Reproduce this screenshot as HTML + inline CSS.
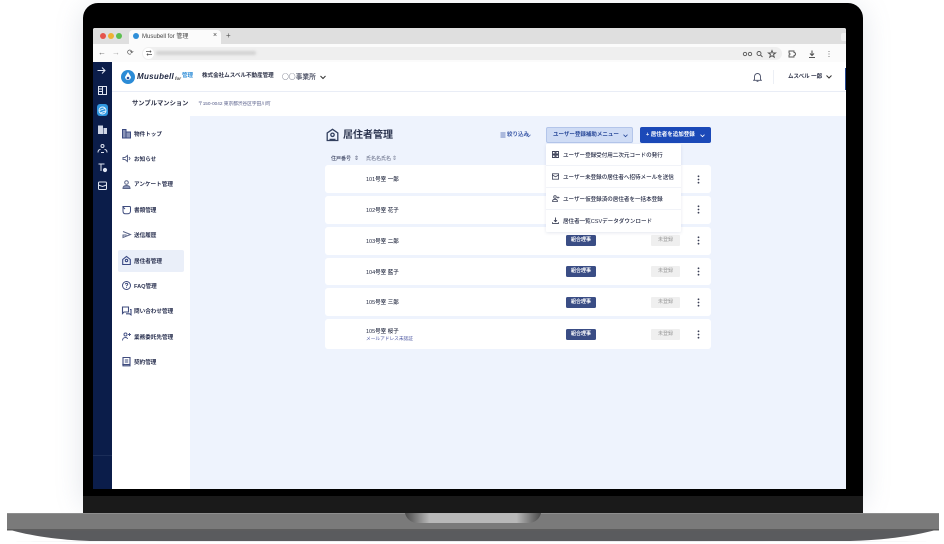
<!DOCTYPE html>
<html lang="ja"><head><meta charset="utf-8"><title>Musubell</title>
<style>
html,body{margin:0;padding:0;background:#fff;}
#w{position:relative;width:944px;height:544px;overflow:hidden;background:#fff;font-family:"Liberation Sans","Noto Sans CJK JP",sans-serif;color:#1b2440;filter:blur(.3px);}
#w div,#w span.a,#w svg{position:absolute;}
.t{white-space:nowrap;line-height:1;}
.nav{left:134px;font-size:5.6px;font-weight:700;color:#2a3150;white-space:nowrap;line-height:8px;}
.ni{left:121px;width:11px;height:11px;}
.si{left:97px;width:11px;height:11px;}
.row{left:325px;width:386px;background:#fff;border-radius:3px;}
.nm{left:366px;font-size:5.5px;font-weight:500;color:#22283f;white-space:nowrap;line-height:8px;}
.kumi{left:566px;width:30px;height:11px;background:#3a4d85;border-radius:1.5px;color:#fff;font-size:5px;font-weight:700;text-align:center;line-height:11px;}
.mi{left:651px;width:29px;height:11px;background:#efefef;border-radius:1px;color:#9a9a9a;font-size:5px;text-align:center;line-height:11px;}
.dots{left:697px;width:3px;height:9px;}
.mt{left:563px;font-size:5.55px;font-weight:500;color:#252b45;white-space:nowrap;line-height:8px;}
</style></head><body><div id="w">
<!-- shadow -->
<div style="left:83px;top:8px;width:780px;height:500px;box-shadow:0 0 28px rgba(120,130,160,.22);border-radius:14px;"></div>
<!-- laptop body -->
<div style="left:83px;top:3px;width:780px;height:510px;background:#000;border-radius:15px 15px 0 0;"></div>
<div style="left:83px;top:496px;width:780px;height:17px;background:#1a1a1a;"></div>
<!-- base -->
<svg style="left:0;top:510px;" width="944" height="34" viewBox="0 0 944 34">
<path d="M12 31C60 32 870 32 932 31Z" fill="#cfd2d8" opacity=".6"/>
<path d="M7 19C30 26 60 30 90 31H850C885 30 915 26 939 19V18H7Z" fill="#5a5b5e"/>
<rect x="7" y="3" width="932" height="17" fill="#7a7a7a"/>
<rect x="7" y="3" width="932" height="1" fill="#8e8e8e"/>
<rect x="7" y="19" width="932" height="1.5" fill="#5d5d5d"/>
<defs><linearGradient id="g" x1="0" x2="1" y1="0" y2="0"><stop offset="0" stop-color="#4b4b4b"/><stop offset=".18" stop-color="#b8b8b8"/><stop offset=".82" stop-color="#b8b8b8"/><stop offset="1" stop-color="#4b4b4b"/></linearGradient></defs>
<path d="M405 3H541C540 8 536 12 530 13H416C410 12 406 8 405 3Z" fill="url(#g)"/>
</svg>
<!-- screen -->
<div style="left:93px;top:28px;width:753px;height:461px;background:#eef3fd;overflow:hidden;border-radius:2px 2px 0 0;"></div>
<!-- tab strip -->
<div style="left:93px;top:28px;width:753px;height:16px;background:#dfdfdf;border-radius:2px 2px 0 0;"></div>
<div style="left:129px;top:30px;width:92px;height:14px;background:#fbfbfb;border-radius:4px 4px 0 0;"></div>
<div style="left:100px;top:33px;width:6px;height:6px;border-radius:50%;background:#e5534b;"></div>
<div style="left:108px;top:33px;width:6px;height:6px;border-radius:50%;background:#eeb132;"></div>
<div style="left:116px;top:33px;width:6px;height:6px;border-radius:50%;background:#5cbf4f;"></div>
<div style="left:133px;top:33px;width:6px;height:6px;border-radius:50%;background:#2f8fd8;"></div>
<div class="t" style="left:142px;top:33.500px;font-size:6px;color:#444;">Musubell for 管理</div>
<div class="t" style="left:213px;top:32px;font-size:7px;color:#444;">×</div>
<div class="t" style="left:226px;top:32px;font-size:8px;color:#555;">+</div>
<div style="left:841px;top:33px;width:5px;height:8px;background:#f0f0f0;border-radius:2px 0 0 2px;"></div>
<!-- toolbar -->
<div style="left:93px;top:44px;width:753px;height:18px;background:#fbfbfb;"></div>
<div style="left:142px;top:47px;width:640px;height:13px;background:#efefef;border-radius:7px;"></div>
<div style="left:143px;top:48px;width:11px;height:11px;background:#fff;border-radius:50%;"></div>
<div style="left:156px;top:51px;width:100px;height:4px;background:#d2d2d2;border-radius:2px;filter:blur(1.2px);"></div>
<div class="t" style="left:98px;top:49px;font-size:8px;color:#666;">←</div>
<div class="t" style="left:112px;top:49px;font-size:8px;color:#aaa;">→</div>
<div class="t" style="left:127px;top:49px;font-size:8px;color:#555;">⟳</div>
<svg style="left:146px;top:50px;" width="6" height="6" viewBox="0 0 6 6"><path d="M0 1.500H5M4 .5 5 1.500 4 2.500M6 4.500H1M2 3.500 1 4.500 2 5.500" stroke="#555" stroke-width=".7" fill="none"/></svg>
<svg style="left:742px;top:49px;" width="90" height="10" viewBox="0 0 90 10" fill="none" stroke="#555" stroke-width=".9">
<circle cx="3" cy="5" r="1.700"/><circle cx="8" cy="5" r="1.700"/><circle cx="17" cy="4.500" r="2"/><path d="M18.500 6 20.500 8"/><path d="M30 1.500 31 4H33.600L31.500 5.600 32.300 8.200 30 6.700 27.700 8.200 28.500 5.600 26.400 4H29Z"/><path d="M47 2H52V3.500A1.200 1.200 0 0 1 52 6.500V8H47V6A1 1 0 0 0 47 4Z"/><path d="M70 1.500V6M68 4.500 70 6.500 72 4.500M67 8.500H73" stroke-width="1.100"/><path d="M87 2V2.800M87 4.600V5.400M87 7.200V8" stroke-width="1"/></svg>
<!-- page -->
<div style="left:112px;top:62px;width:734px;height:54px;background:#fff;"></div>
<div style="left:112px;top:91px;width:734px;height:1px;background:#e9edf6;"></div>
<div style="left:112px;top:116px;width:78px;height:373px;background:#fff;"></div>
<div style="left:93px;top:62px;width:19px;height:427px;background:#0b1d4a;"></div>
<div style="left:93px;top:455px;width:19px;height:1px;background:#1b2d58;"></div>
<!-- sidebar icons -->
<svg class="si" style="left:96px;top:65px;" viewBox="0 0 11 11" fill="none" stroke="#dfe5f2" stroke-width="1"><path d="M1.500 5.500H9M6 2.500 9 5.500 6 8.500"/></svg>
<svg class="si" style="top:85px;" viewBox="0 0 11 11" fill="none" stroke="#dfe5f2" stroke-width="1"><rect x="1.500" y="1.500" width="8" height="8"/><path d="M5.500 1.500V9.500M1.500 4H5M1.500 6.500H5"/></svg>
<div style="left:97px;top:104px;width:11px;height:12px;border-radius:3px;background:#2f97e0;"></div>
<svg class="si" style="top:104.500px;" viewBox="0 0 11 11" fill="none" stroke="#eaf5ff" stroke-width=".9"><circle cx="5.500" cy="5.500" r="3.500"/><path d="M2.500 5.500 8 3.500M3 8 8.500 6"/></svg>
<svg class="si" style="top:124px;" viewBox="0 0 11 11" fill="#cfd6e6"><path d="M1 1.500H6V10H1ZM6.500 4H10V10H6.500Z"/></svg>
<svg class="si" style="top:143px;" viewBox="0 0 11 11" fill="none" stroke="#dfe5f2" stroke-width="1"><circle cx="5.500" cy="3" r="1.500"/><path d="M1 9.500C1 7.500 2 6.500 3.500 6.500M10 9.500C10 7.500 9 6.500 7.500 6.500M4 9.500H7"/></svg>
<svg class="si" style="top:162px;" viewBox="0 0 11 11" fill="none" stroke="#dfe5f2" stroke-width="1"><path d="M1.500 2H7.500M4 2V9"/><circle cx="8" cy="8" r="1.600" fill="#dfe5f2"/></svg>
<svg class="si" style="top:180px;" viewBox="0 0 11 11" fill="none" stroke="#dfe5f2" stroke-width="1"><rect x="1.500" y="2" width="8" height="7.500" rx="1"/><path d="M1.500 5 5.500 6.500 9.500 5"/></svg>
<!-- header -->
<div style="left:121px;top:70px;width:14px;height:14px;border-radius:50%;background:#2b8bd6;"></div>
<svg style="left:124px;top:72px;" width="8" height="10" viewBox="0 0 8 10"><path d="M4 0 7 5A3 3 0 1 1 1 5Z" fill="#fff"/><circle cx="4" cy="6" r="1.300" fill="#2b4f9a"/></svg>
<div class="t" style="left:137px;top:73px;font-size:8px;font-weight:700;font-style:italic;letter-spacing:.3px;color:#222a44;">Musubell</div>
<div class="t" style="left:175px;top:76.500px;font-size:4.500px;font-weight:700;font-style:italic;color:#444;">for</div>
<div class="t" style="left:182px;top:74px;font-size:5.500px;font-weight:700;color:#2b8bd6;">管理</div>
<div class="t" style="left:202px;top:74px;font-size:5.550px;font-weight:700;color:#2a2f45;">株式会社ムスベル不動産管理</div>
<div class="t" style="left:282px;top:73px;font-size:6.800px;font-weight:500;color:#3a3f55;font-family:'Noto Sans CJK JP',sans-serif;">○○事業所</div>
<svg style="left:320px;top:75px;" width="6" height="5" viewBox="0 0 6 5" fill="none" stroke="#333" stroke-width="1"><path d="M.5 1 3 3.500 5.500 1"/></svg>
<svg style="left:753px;top:72px;" width="9" height="10" viewBox="0 0 9 10" fill="none" stroke="#4a5068" stroke-width=".9"><path d="M1.500 7.500V4.500A3 3 0 0 1 7.500 4.500V7.500L8.300 8.300H.7ZM3.600 9.300H5.400"/></svg>
<div style="left:773px;top:70px;width:1px;height:14px;background:#eceff5;"></div>
<div class="t" style="left:788px;top:75px;font-size:5.500px;font-weight:700;color:#2a2f45;">ムスベル 一郎</div>
<svg style="left:826px;top:75px;" width="6" height="4" viewBox="0 0 6 4" fill="none" stroke="#333" stroke-width="1"><path d="M.5 .5 3 3 5.500 .5"/></svg>
<div style="left:845px;top:68px;width:1px;height:22px;background:#23458e;"></div>
<!-- subheader -->
<div class="t" style="left:132px;top:101px;font-size:6.300px;font-weight:700;color:#2a2f45;">サンプルマンション</div>
<div class="t" style="left:198px;top:102px;font-size:4.700px;color:#555c88;">〒150-0042 東京都渋谷区宇田川町</div>
<!-- nav -->
<div style="left:118px;top:250px;width:66px;height:22px;background:#eaeff9;border-radius:2px;"></div>
<svg class="ni" style="top:128px;" viewBox="0 0 11 11" fill="none" stroke="#3b4a80" stroke-width="1"><path d="M1.500 1.500H5V10H1.500ZM5 4H9.500V10H5Z" fill="#8b95b8"/></svg>
<svg class="ni" style="top:153px;" viewBox="0 0 11 11" fill="none" stroke="#5a6488" stroke-width="1"><path d="M2 4.500H4L6.500 2.500V8.500L4 6.500H2ZM8 4 9 5.500 8 7"/></svg>
<svg class="ni" style="top:179px;" viewBox="0 0 11 11" fill="none" stroke="#5a6488" stroke-width="1"><circle cx="5.500" cy="3.500" r="1.800"/><path d="M2 9.500C2 7.500 3.500 6.500 5.500 6.500S9 7.500 9 9.500Z" fill="#8b95b8"/></svg>
<svg class="ni" style="top:204px;" viewBox="0 0 11 11" fill="none" stroke="#3f4c7e" stroke-width="1"><path d="M2 2.500H8.500A1 1 0 0 1 9.500 3.500V7C9.500 8.800 8 9.800 6.500 9.800H4.500C3 9.800 2 8.800 2 7Z"/><path d="M1.500 2.500 4 5"/></svg>
<svg class="ni" style="top:229px;" viewBox="0 0 11 11" fill="none" stroke="#5a6488" stroke-width="1"><path d="M2 2.500 9.500 5.500 2 8.500V6H5.500"/></svg>
<svg class="ni" style="top:255px;" viewBox="0 0 11 11" fill="none" stroke="#3a4a85" stroke-width="1.100"><path d="M1.700 9.500V4.500L5.500 1.500 9.300 4.500V9.500Z"/><circle cx="5.500" cy="5.500" r="1.200"/></svg>
<svg class="ni" style="top:280px;" viewBox="0 0 11 11" fill="none" stroke="#3f4c7e" stroke-width="1"><circle cx="5.500" cy="5.500" r="4"/><path d="M4.300 4.300C4.500 3 6.700 3 6.700 4.400 6.700 5.300 5.500 5.300 5.500 6.300M5.500 7.200V8"/></svg>
<svg class="ni" style="top:305px;" viewBox="0 0 11 11" fill="none" stroke="#3f4c7e" stroke-width="1.100"><path d="M1.500 2H7.500V7H3L1.500 8.500ZM9 4.500H10V9.800L8.500 8.800H5"/></svg>
<svg class="ni" style="top:331px;" viewBox="0 0 11 11" fill="none" stroke="#4a5688" stroke-width="1"><circle cx="4.500" cy="3.500" r="1.500"/><path d="M1.500 9.500C1.500 7.500 3 6.500 4.500 6.500S6.500 7.500 6.500 8M8.500 2V5M7 3.500H10"/></svg>
<svg class="ni" style="top:356px;" viewBox="0 0 11 11" fill="none" stroke="#3f4c7e" stroke-width="1.100"><path d="M2 1.500H9V9.800H2ZM3.800 4H7.200M3.800 6H7.200"/><path d="M1.300 8.500H9.500" /></svg>
<div class="nav" style="top:131px;">物件トップ</div>
<div class="nav" style="top:156px;">お知らせ</div>
<div class="nav" style="top:181px;">アンケート管理</div>
<div class="nav" style="top:207px;">書類管理</div>
<div class="nav" style="top:232px;">送信履歴</div>
<div class="nav" style="top:258px;">居住者管理</div>
<div class="nav" style="top:283px;">FAQ管理</div>
<div class="nav" style="top:308px;">問い合わせ管理</div>
<div class="nav" style="top:334px;">業務委託先管理</div>
<div class="nav" style="top:359px;">契約管理</div>
<!-- title -->
<svg style="left:326px;top:128px;" width="13" height="14" viewBox="0 0 13 14" fill="none" stroke="#33405f" stroke-width="1.300"><path d="M1.200 12.500V5L6.500 1.300 11.800 5V12.500Z"/><circle cx="6.500" cy="6.800" r="1.700"/><path d="M3.500 11.500H9.500" stroke-width="1.500"/></svg>
<div class="t" style="left:343px;top:131px;font-size:10px;font-weight:700;color:#2c3550;">居住者管理</div>
<svg style="left:500px;top:132px;" width="6" height="6" viewBox="0 0 6 6" fill="none" stroke="#3c5aa8" stroke-width=".7"><path d="M.5 1H5.500M.5 3H5.500M.5 5H5.500"/></svg>
<div class="t" style="left:507px;top:133px;font-size:5.500px;font-weight:700;color:#3c5aa8;">絞り込み</div>
<svg style="left:526px;top:133.500px;" width="5" height="4" viewBox="0 0 5 4" fill="none" stroke="#3c5aa8" stroke-width=".7"><path d="M.5 .7 2.500 2.700 4.500 .7"/></svg>
<div class="t" style="left:331px;top:157px;font-size:5px;font-weight:500;color:#3a4260;">住戸番号</div>
<div class="t" style="left:354px;top:156px;font-size:6px;color:#555c78;">⇕</div>
<div class="t" style="left:366px;top:157px;font-size:5px;color:#555c78;">氏名名氏名</div>
<div class="t" style="left:392px;top:156px;font-size:6px;color:#7a8098;">⇕</div>
<!-- rows -->
<div class="row" style="top:165px;height:28px;"></div>
<div class="row" style="top:196px;height:28px;"></div>
<div class="row" style="top:227px;height:28px;"></div>
<div class="row" style="top:258px;height:27px;"></div>
<div class="row" style="top:288px;height:28px;"></div>
<div class="row" style="top:319px;height:30px;"></div>
<div class="nm" style="top:176px;">101号室 一郎</div>
<div class="nm" style="top:207px;">102号室 花子</div>
<div class="nm" style="top:238px;">103号室 二郎</div>
<div class="nm" style="top:269px;">104号室 藍子</div>
<div class="nm" style="top:299px;">105号室 三郎</div>
<div class="nm" style="top:328px;">105号室 桜子</div>
<div class="t" style="left:366px;top:337px;font-size:4.700px;color:#4a55a0;">メールアドレス未認証</div>
<div class="kumi" style="top:235px;">組合理事</div><div class="mi" style="top:235px;">未登録</div>
<div class="kumi" style="top:266px;">組合理事</div><div class="mi" style="top:266px;">未登録</div>
<div class="kumi" style="top:297px;">組合理事</div><div class="mi" style="top:297px;">未登録</div>
<div class="kumi" style="top:329px;">組合理事</div><div class="mi" style="top:329px;">未登録</div>
<svg class="dots" style="top:175px;" viewBox="0 0 3 9" fill="#3a3f55"><circle cx="1.500" cy="1.300" r=".9"/><circle cx="1.500" cy="4.500" r=".9"/><circle cx="1.500" cy="7.700" r=".9"/></svg>
<svg class="dots" style="top:205px;" viewBox="0 0 3 9" fill="#3a3f55"><circle cx="1.500" cy="1.300" r=".9"/><circle cx="1.500" cy="4.500" r=".9"/><circle cx="1.500" cy="7.700" r=".9"/></svg>
<svg class="dots" style="top:236px;" viewBox="0 0 3 9" fill="#3a3f55"><circle cx="1.500" cy="1.300" r=".9"/><circle cx="1.500" cy="4.500" r=".9"/><circle cx="1.500" cy="7.700" r=".9"/></svg>
<svg class="dots" style="top:267px;" viewBox="0 0 3 9" fill="#3a3f55"><circle cx="1.500" cy="1.300" r=".9"/><circle cx="1.500" cy="4.500" r=".9"/><circle cx="1.500" cy="7.700" r=".9"/></svg>
<svg class="dots" style="top:298px;" viewBox="0 0 3 9" fill="#3a3f55"><circle cx="1.500" cy="1.300" r=".9"/><circle cx="1.500" cy="4.500" r=".9"/><circle cx="1.500" cy="7.700" r=".9"/></svg>
<svg class="dots" style="top:330px;" viewBox="0 0 3 9" fill="#3a3f55"><circle cx="1.500" cy="1.300" r=".9"/><circle cx="1.500" cy="4.500" r=".9"/><circle cx="1.500" cy="7.700" r=".9"/></svg>
<!-- buttons -->
<div style="left:546px;top:127px;width:87px;height:16px;background:#cfdcf5;border:1px solid #b3c5ea;box-sizing:border-box;border-radius:2px;"></div>
<div class="t" style="left:553px;top:133px;font-size:5.500px;font-weight:700;color:#2a4a9a;">ユーザー登録補助メニュー</div>
<svg style="left:623px;top:133.500px;" width="5" height="4" viewBox="0 0 5 4" fill="none" stroke="#2a4a9a" stroke-width=".8"><path d="M.5 .7 2.500 2.700 4.500 .7"/></svg>
<div style="left:640px;top:127px;width:71px;height:16px;background:#1b49b8;border-radius:2px;"></div>
<div class="t" style="left:646px;top:133px;font-size:5.500px;font-weight:700;color:#fff;">+ 居住者を追加登録</div>
<svg style="left:700px;top:133.500px;" width="5" height="4" viewBox="0 0 5 4" fill="none" stroke="#fff" stroke-width=".8"><path d="M.5 .7 2.500 2.700 4.500 .7"/></svg>
<!-- dropdown -->
<div style="left:546px;top:144px;width:135px;height:88px;background:#fff;box-shadow:0 1px 3px rgba(70,90,140,.14);border-radius:1px;"></div>
<div style="left:546px;top:165px;width:135px;height:1px;background:#f1f3f8;"></div>
<div style="left:546px;top:187px;width:135px;height:1px;background:#f1f3f8;"></div>
<div style="left:546px;top:209px;width:135px;height:1px;background:#f1f3f8;"></div>
<svg style="left:552px;top:151px;" width="7" height="7" viewBox="0 0 7 7" fill="none" stroke="#3d4258" stroke-width=".9"><path d="M.5 .5H3V3H.5ZM4 .5H6.500V3H4ZM.5 4H3V6.500H.5ZM4 4H6.500V6.500H4Z"/></svg>
<svg style="left:552px;top:173px;" width="7" height="7" viewBox="0 0 7 7" fill="none" stroke="#3d4258" stroke-width=".8"><rect x=".4" y=".8" width="6.200" height="5.400"/><path d="M.4 2 3.500 3.800 6.600 2"/></svg>
<svg style="left:552px;top:195px;" width="8" height="7" viewBox="0 0 8 7" fill="none" stroke="#3d4258" stroke-width=".8"><circle cx="3" cy="2" r="1.300"/><path d="M.5 6.500C.5 5 1.500 4.300 3 4.300S5.500 5 5.500 6.500ZM6 1.500V3.500M5 2.500H7.500"/></svg>
<svg style="left:552px;top:217px;" width="7" height="7" viewBox="0 0 7 7" fill="none" stroke="#3d4258" stroke-width=".9"><path d="M3.500 .5V4.500M2 3.200 3.500 4.700 5 3.200M.5 5.300V6.400H6.500V5.300"/></svg>
<div class="mt" style="top:152px;">ユーザー登録受付用二次元コードの発行</div>
<div class="mt" style="top:174px;">ユーザー未登録の居住者へ招待メールを送信</div>
<div class="mt" style="top:196px;">ユーザー仮登録済の居住者を一括本登録</div>
<div class="mt" style="top:218px;">居住者一覧CSVデータダウンロード</div>
</div></body></html>
